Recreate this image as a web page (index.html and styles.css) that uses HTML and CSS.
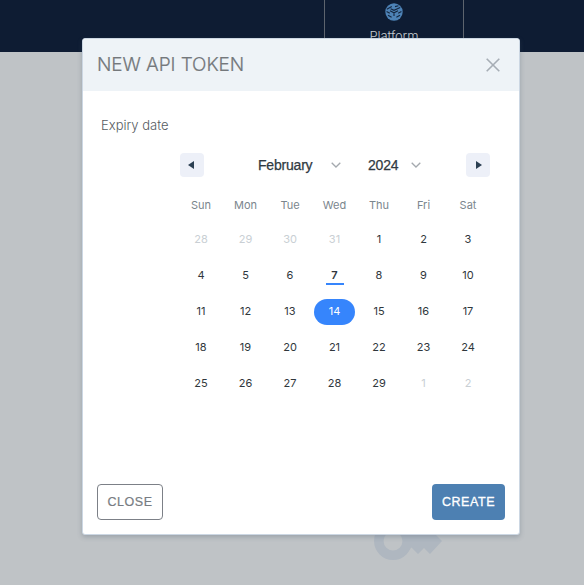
FILE: index.html
```html
<!DOCTYPE html>
<html lang="en">
<head>
<meta charset="utf-8">
<title>New API Token</title>
<link rel="stylesheet" href="styles.css">
</head>
<body>
<header class="topbar">
  <div class="tab">
    <svg width="18" height="18" viewBox="0 0 18 18"><circle cx="9" cy="9" r="8.7" fill="#4d82b6"/><path d="M1.800 6.200 L6.800 3.600 M5.600 5.800 L9 7.300 L15.2 4.600 M10 3.600 L13.4 2.8 M9 9.6 V13 M1.600 8.600 L4.800 10.200 M3 12.200 L6.600 14.200 M16.400 8.600 L13.200 10.200 M15 12.200 L11.400 14.200 M5 7.800 L9 9.800 L13 7.800" fill="none" stroke="#14263f" stroke-width="1.1"/></svg>
    <span>Platform</span>
  </div>
</header>
<svg class="key" width="70" height="38" viewBox="0 0 70 38"><circle cx="19" cy="18" r="14.200" fill="none" stroke="#afb7c0" stroke-width="9.500"/><path fill="#afb7c0" d="M33 8 H58 L68 18 L56 31 L50 25 L44 31 L37.500 24.500 L33 28 Z"/></svg>
<section class="modal" role="dialog">
  <div class="modal-head">
    <h1>NEW API TOKEN</h1>
    <svg width="14" height="14" viewBox="0 0 14 14"><path d="M.7 .7 L13.3 13.3 M13.3 .7 L.7 13.3" stroke="#a6adb5" stroke-width="1.6"/></svg>
  </div>
  <div class="modal-body">
    <div class="label">Expiry date</div>
    <div class="calendar">
      <div class="nav">
        <button class="arrow prev"><svg width="6" height="8" viewBox="0 0 6 8"><path d="M6 0 V8 L0 4 Z" fill="#2b3f52"/></svg></button>
        <div class="select month"><span>February</span><svg width="10" height="6" viewBox="0 0 10 6"><path d="M.7 .7 L5 5 L9.300 .7" fill="none" stroke="#a4a9ae" stroke-width="1.300"/></svg></div>
        <div class="select year"><span>2024</span><svg width="10" height="6" viewBox="0 0 10 6"><path d="M.7 .7 L5 5 L9.300 .7" fill="none" stroke="#a4a9ae" stroke-width="1.300"/></svg></div>
        <button class="arrow next"><svg width="6" height="8" viewBox="0 0 6 8"><path d="M0 0 V8 L6 4 Z" fill="#2b3f52"/></svg></button>
      </div>
      <div class="grid weekdays"><span>Sun</span><span>Mon</span><span>Tue</span><span>Wed</span><span>Thu</span><span>Fri</span><span>Sat</span></div>
      <div class="grid days">
        <span class="out">28</span><span class="out">29</span><span class="out">30</span><span class="out">31</span><span>1</span><span>2</span><span>3</span>
        <span>4</span><span>5</span><span>6</span><span class="today"><b>7</b></span><span>8</span><span>9</span><span>10</span>
        <span>11</span><span>12</span><span>13</span><span class="selected"><b>14</b></span><span>15</span><span>16</span><span>17</span>
        <span>18</span><span>19</span><span>20</span><span>21</span><span>22</span><span>23</span><span>24</span>
        <span>25</span><span>26</span><span>27</span><span>28</span><span>29</span><span class="out">1</span><span class="out">2</span>
      </div>
    </div>
  </div>
  <div class="modal-foot">
    <button class="btn close">CLOSE</button>
    <button class="btn create">CREATE</button>
  </div>
</section>
</body>
</html>
```

FILE: styles.css
```css
* { box-sizing: border-box; }
body {
  margin: 0;
  width: 584px;
  height: 585px;
  overflow: hidden;
  position: relative;
  background: #bfc3c6;
  font-family: Inter, sans-serif;
}
svg { display: block; flex: none; }
button { padding: 0; border: 0; }
.topbar { height: 52px; background: #0e1c33; padding-left: 324px; }
.tab {
  width: 140px;
  height: 52px;
  padding-top: 3px;
  border: solid #5d646e;
  border-width: 0 1px;
  display: flex;
  flex-direction: column;
  align-items: center;
}
.tab span {
  margin-top: 6px;
  font: 300 13px/18px Inter, sans-serif;
  letter-spacing: -.1px;
  color: #c8ccd0;
}
.key { position: absolute; left: 374px; top: 523px; }
.modal {
  position: absolute;
  left: 82px;
  top: 38px;
  width: 438px;
  height: 497px;
  display: flex;
  flex-direction: column;
  background: #fff;
  border: 1px solid #ccd7e3;
  border-radius: 3px;
  box-shadow: 0 2px 5px rgba(70, 85, 105, .3);
}
.modal-head {
  height: 52px;
  padding: 0 19px 0 14px;
  display: flex;
  justify-content: space-between;
  align-items: center;
  background: #eef3f7;
  border-radius: 2px 2px 0 0;
}
h1 {
  margin: 0;
  font-size: 19px;
  line-height: 24px;
  font-weight: 300;
  letter-spacing: -.1px;
  color: #74787c;
  -webkit-text-stroke: .2px #74787c;
}
.modal-body { flex: 1; padding-top: 24px; }
.label { margin-left: 18px; font-size: 13px; line-height: 20px; font-weight: 300; color: #565c61; }
.calendar { width: 311.500px; margin: 18px 0 0 95.750px; }
.nav { height: 24px; padding: 0 0 0 1.250px; display: flex; align-items: center; }
.arrow {
  width: 24px;
  height: 24px;
  display: flex;
  align-items: center;
  justify-content: center;
  background: #edf0f8;
  border-radius: 4px;
}
.prev svg { margin-right: 2px; }
.next svg { margin-left: 2px; }
.select {
  display: flex;
  align-items: center;
  justify-content: space-between;
  font: 14px/20px "Liberation Sans", sans-serif;
  letter-spacing: -.2px;
  color: #303a42;
  -webkit-text-stroke: .25px #303a42;
}
.month { width: 83px; margin-left: 54px; }
.year { width: 53px; margin: 0 45px 0 27px; }
.grid { display: grid; grid-template-columns: repeat(7, 44.500px); text-align: center; }
.weekdays { margin-top: 18px; font-size: 11px; line-height: 20px; color: #7b868d; height: 26px; }
.days { grid-auto-rows: 36px; font-size: 11px; line-height: 36px; color: #30373c; }
.days .out { color: #c9cfd4; }
.days b { display: block; }
.today b { width: 18px; height: 28px; margin: 0 auto; border-bottom: 2px solid #3685fc; font-weight: 600; }
.selected b {
  width: 41px;
  height: 26px;
  margin: 6px auto 0;
  line-height: 24px;
  font-weight: 400;
  color: #fff;
  background: #3685fc;
  border-radius: 13px;
}
.modal-foot { padding: 0 14px; height: 50px; display: flex; justify-content: space-between; }
.btn { height: 36px; border-radius: 4px; font: 12.500px/34px "Liberation Sans", sans-serif; letter-spacing: .55px; text-align: center; }
.close { width: 66px; background: #fff; border: 1px solid #7c8087; color: #777c82; -webkit-text-stroke: .2px #777c82; }
.create { width: 73px; background: #4d80b2; color: #fff; -webkit-text-stroke: .3px #fff; }
```
